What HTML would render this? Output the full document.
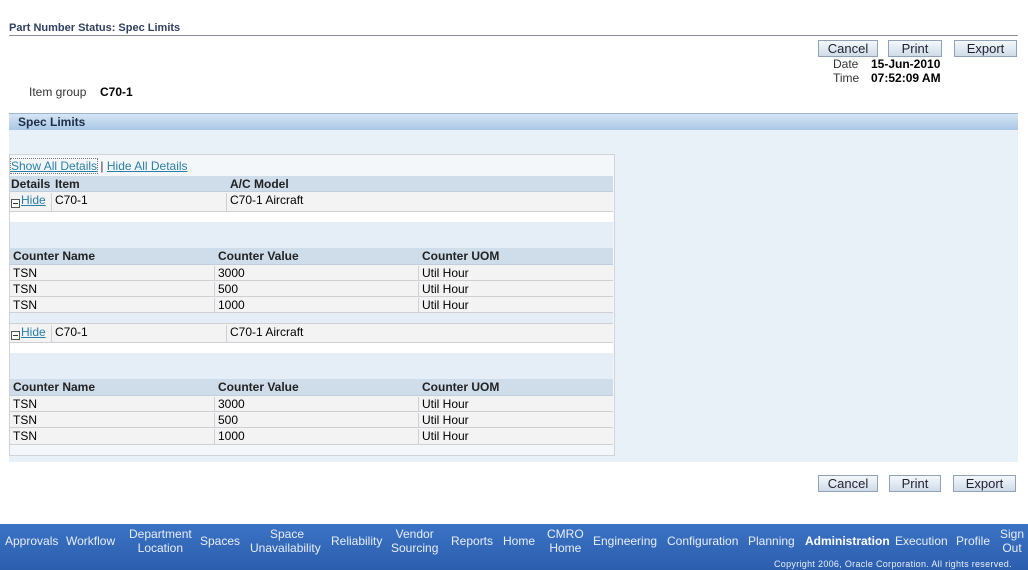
<!DOCTYPE html>
<html><head><meta charset="utf-8"><style>
*{margin:0;padding:0;box-sizing:border-box}
body{width:1028px;height:570px;background:#fff;font-family:"Liberation Sans",Arial,sans-serif;font-size:12px;color:#000;position:relative;overflow:hidden}
.a{position:absolute;white-space:nowrap}
.btn{position:absolute;height:17px;border:1px solid #8fa2b8;background:linear-gradient(#f4f8fc,#cfdbe8);font-size:13px;color:#223;text-align:center;line-height:15px}
.row{position:absolute;left:10px;width:603px;border-bottom:1px solid #cfcfd4;background:#f3f3f3}
.row.hd{background:#cfdcea;font-weight:bold;color:#222;border-bottom:1px solid #c0cddc}
.row span{position:absolute;top:1px;padding-left:3px;height:100%;border-left:1px solid #cfcfd4}
.lk{color:#2a7fa6;text-decoration:underline}
.min{display:inline-block;width:9px;height:9px;border:1px solid #555;position:relative;top:4px;margin-right:1px;background:#fff}
.min:after{content:"";position:absolute;left:1px;top:3px;width:5px;height:1px;background:#333}
.nav{position:absolute;top:524px;left:0;width:1028px;height:46px;background:linear-gradient(#3b73c4,#2c5eae)}
.nav div{position:absolute;color:#e8eef8;font-family:"Liberation Sans",Arial,sans-serif;font-size:12px;text-align:center;line-height:14px}
</style></head><body>
<div class="a" style="left:9px;top:22px;font-weight:bold;color:#2f3f5f;font-size:11px">Part Number Status: Spec Limits</div>
<div class="a" style="left:9px;top:35px;width:1009px;height:1px;background:#8a8f98"></div>
<div class="btn" style="left:818px;top:40px;width:60px">Cancel</div>
<div class="btn" style="left:888px;top:40px;width:54px">Print</div>
<div class="btn" style="left:954px;top:40px;width:63px">Export</div>
<div class="a" style="left:833px;top:57px;color:#333">Date</div>
<div class="a" style="left:871px;top:57px;font-weight:bold;font-size:12px">15-Jun-2010</div>
<div class="a" style="left:833px;top:71px;color:#333">Time</div>
<div class="a" style="left:871px;top:71px;font-weight:bold;font-size:12px">07:52:09 AM</div>
<div class="a" style="left:29px;top:85px;color:#333">Item group</div>
<div class="a" style="left:100px;top:85px;font-weight:bold">C70-1</div>

<div class="a" style="left:9px;top:113px;width:1009px;height:17px;background:linear-gradient(#d6e5f4,#a9c7e6);border-top:1px solid #9bb5d2"></div>
<div class="a" style="left:18px;top:115px;font-weight:bold;color:#1e2e48">Spec Limits</div>
<div class="a" style="left:9px;top:130px;width:1009px;height:332px;background:#e8f0f8"></div>
<div class="a" style="left:9px;top:154px;width:606px;height:302px;background:#f4f7fa;border:1px solid #d0d4da"></div>

<div class="a" style="left:11px;top:159px"><span class="lk" style="outline:1px dotted #777">Show All Details</span> <span style="color:#333">|</span> <span class="lk">Hide All Details</span></div>

<div class="row hd" style="top:176px;height:16px"><span style="left:0;border:0;padding-left:1px">Details</span><span style="left:42px;border:0">Item</span><span style="left:217px;border:0">A/C Model</span></div>
<div class="row" style="top:192px;height:20px"><span style="left:0;border:0;padding-left:1px"><i class="min"></i><a class="lk">Hide</a></span><span style="left:41px">C70-1</span><span style="left:216px">C70-1 Aircraft</span></div>
<div class="a" style="left:10px;top:212px;width:603px;height:10px;background:#fff"></div>
<div class="a" style="left:10px;top:222px;width:603px;height:26px;background:#e5eef7"></div>
<div class="row hd" style="top:248px;height:17px"><span style="left:0;border:0">Counter Name</span><span style="left:205px;border:0">Counter Value</span><span style="left:409px;border:0">Counter UOM</span></div>
<div class="row" style="top:265px;height:16px"><span style="left:0;border:0">TSN</span><span style="left:204px">3000</span><span style="left:408px">Util Hour</span></div>
<div class="row" style="top:281px;height:16px"><span style="left:0;border:0">TSN</span><span style="left:204px">500</span><span style="left:408px">Util Hour</span></div>
<div class="row" style="top:297px;height:16px"><span style="left:0;border:0">TSN</span><span style="left:204px">1000</span><span style="left:408px">Util Hour</span></div>
<div class="a" style="left:10px;top:313px;width:603px;height:10px;background:#e5eef7"></div>
<div class="row" style="top:323px;height:20px;border-top:1px solid #cfcfd4"><span style="left:0;border:0;padding-left:1px"><i class="min"></i><a class="lk">Hide</a></span><span style="left:41px">C70-1</span><span style="left:216px">C70-1 Aircraft</span></div>
<div class="a" style="left:10px;top:343px;width:603px;height:10px;background:#fff"></div>
<div class="a" style="left:10px;top:353px;width:603px;height:26px;background:#e5eef7"></div>
<div class="row hd" style="top:379px;height:17px"><span style="left:0;border:0">Counter Name</span><span style="left:205px;border:0">Counter Value</span><span style="left:409px;border:0">Counter UOM</span></div>
<div class="row" style="top:396px;height:16px"><span style="left:0;border:0">TSN</span><span style="left:204px">3000</span><span style="left:408px">Util Hour</span></div>
<div class="row" style="top:412px;height:16px"><span style="left:0;border:0">TSN</span><span style="left:204px">500</span><span style="left:408px">Util Hour</span></div>
<div class="row" style="top:428px;height:17px"><span style="left:0;border:0">TSN</span><span style="left:204px">1000</span><span style="left:408px">Util Hour</span></div>

<div class="btn" style="left:818px;top:475px;width:60px">Cancel</div>
<div class="btn" style="left:889px;top:475px;width:52px">Print</div>
<div class="btn" style="left:953px;top:475px;width:63px">Export</div>

<div class="nav">
<div style="left:5px;top:10px">Approvals</div>
<div style="left:66px;top:10px">Workflow</div>
<div style="left:129px;top:3px">Department<br>Location</div>
<div style="left:200px;top:10px">Spaces</div>
<div style="left:250px;top:3px">&nbsp;Space<br>Unavailability</div>
<div style="left:331px;top:10px">Reliability</div>
<div style="left:391px;top:3px">Vendor<br>Sourcing</div>
<div style="left:451px;top:10px">Reports</div>
<div style="left:503px;top:10px">Home</div>
<div style="left:547px;top:3px">CMRO<br>Home</div>
<div style="left:593px;top:10px">Engineering</div>
<div style="left:667px;top:10px">Configuration</div>
<div style="left:748px;top:10px">Planning</div>
<div style="left:805px;top:10px;font-weight:bold;color:#fff">Administration</div>
<div style="left:895px;top:10px">Execution</div>
<div style="left:956px;top:10px">Profile</div>
<div style="left:1000px;top:3px">Sign<br>Out</div>
<div style="left:774px;top:35px;font-size:9px;line-height:10px;letter-spacing:0.3px">Copyright 2006, Oracle Corporation. All rights reserved.</div>
</div>
</body></html>
